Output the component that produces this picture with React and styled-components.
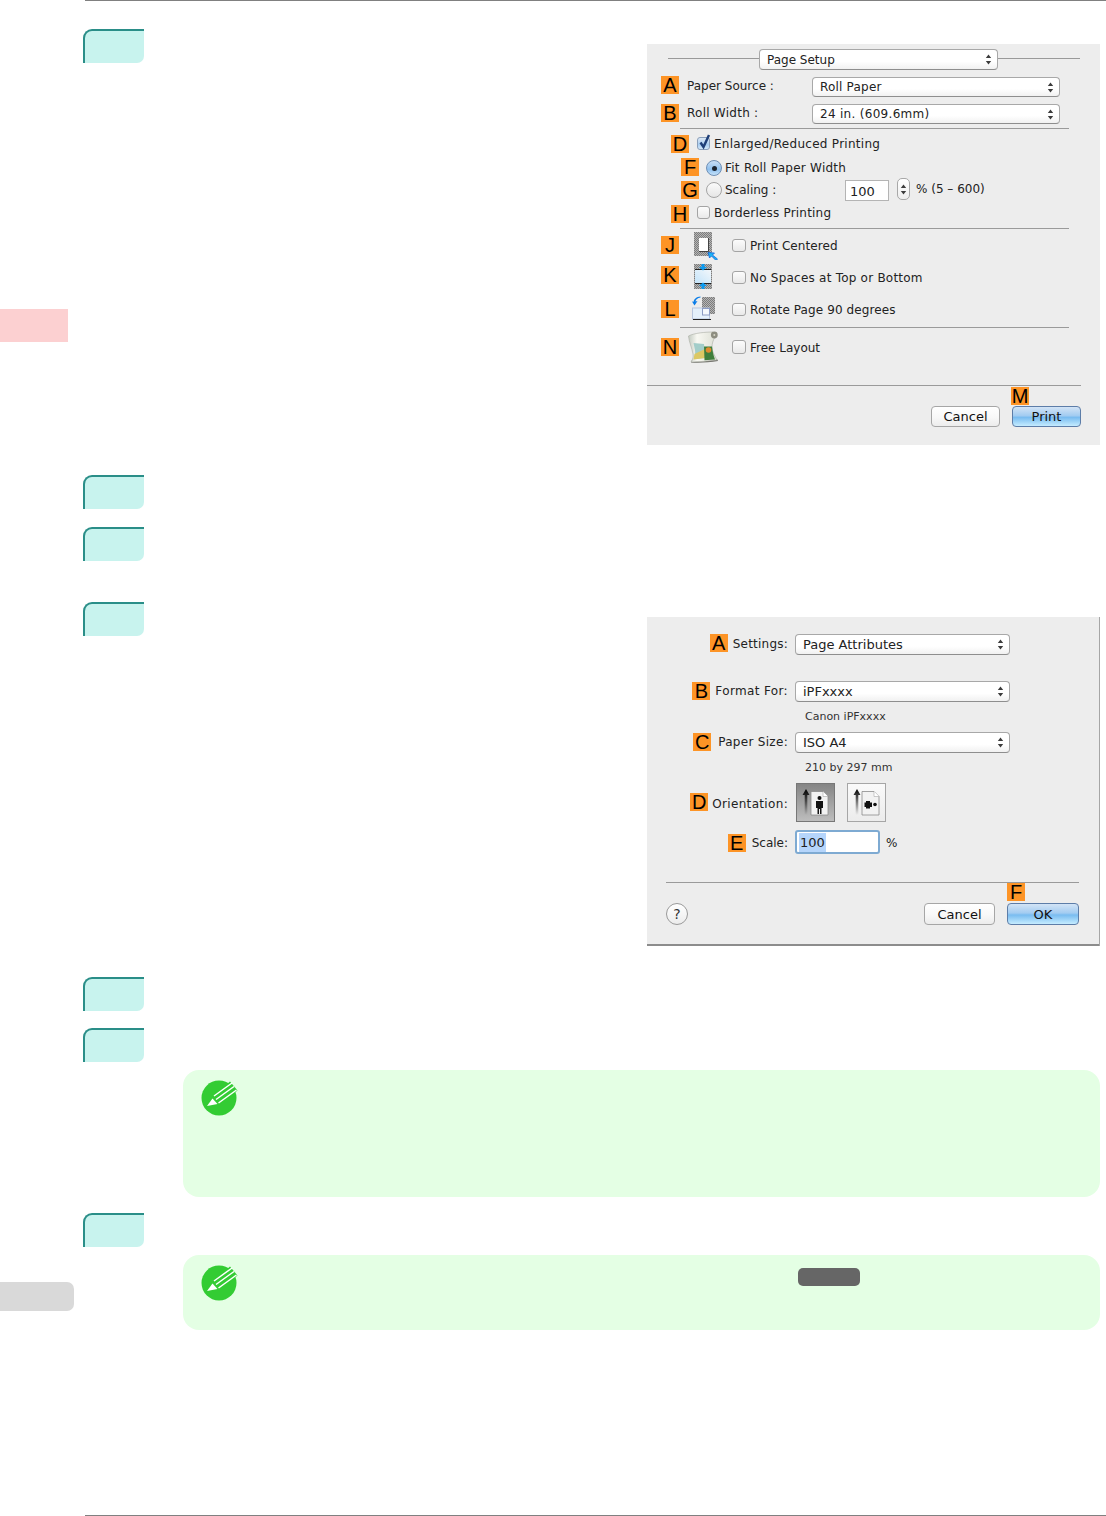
import styled, { createGlobalStyle } from "styled-components";

const GlobalStyle = createGlobalStyle`
  html, body {
    margin: 0;
    padding: 0;
    background: #fff;
    font-family: "DejaVu Sans", "Liberation Sans", sans-serif;
  }
`;

const Page = styled.div`
  width: 1106px;
  height: 1516px;
  display: flex;
  overflow: hidden;
  background: #fff;
`;

const Sidebar = styled.div`
  width: 83px;
  flex: none;
  display: flex;
  flex-direction: column;
`;

const ChapterTab = styled.div`
  width: 68px;
  height: 33px;
  margin-top: 309px;
  background: #fcd0d1;
`;

const SectionTab = styled.div`
  width: 74px;
  height: 29px;
  margin-top: 940px;
  background: #d9d9d9;
  border-radius: 0 7px 7px 0;
`;

const Main = styled.div`
  flex: 1;
  display: flex;
  flex-direction: column;
`;

const Rule = styled.div`
  height: 1px;
  flex: none;
  margin-left: 2px;
  background: #808080;
`;

const Content = styled.div`
  flex: 1;
  display: flex;
  flex-direction: column;
  padding: 28px 6px 0 0;
`;

const StepRow = styled.div`
  display: flex;
  justify-content: space-between;
  align-items: flex-start;
  margin-top: ${(p) => p.$top || 0}px;
`;

const StepBadge = styled.div`
  width: 61px;
  height: 34px;
  box-sizing: border-box;
  background: #c8f3ee;
  border-top: 2px solid #2a8e88;
  border-left: 2px solid #2a8e88;
  border-radius: 9px 0 7px 0;
`;

const Note = styled.div`
  display: flex;
  align-items: flex-start;
  margin: ${(p) => p.$top}px 0 0 100px;
  height: ${(p) => p.$h}px;
  padding: 10px 0 0 18px;
  box-sizing: border-box;
  background: #e4ffe4;
  border-radius: 16px;
`;

const KeyCap = styled.div`
  width: 62px;
  height: 18px;
  margin: 3px 0 0 560px;
  background: #666;
  border-radius: 5px;
`;

const Dialog = styled.div`
  width: 453px;
  margin-top: ${(p) => p.$top}px;
  padding: ${(p) => p.$pt}px 0 ${(p) => p.$pb}px;
  box-sizing: border-box;
  background: #ededed;
  color: #222;
  font-size: 12px;
  ${(p) => p.$framed && "box-shadow: inset -1px 0 #a6a6a6, inset 0 -2px #8c8c8c;"}
`;

const Row = styled.div`
  display: flex;
  align-items: flex-start;
  margin-top: ${(p) => p.$top || 0}px;
  padding-left: ${(p) => p.$left || 0}px;
`;

const Divider = styled.div`
  height: 1px;
  margin: ${(p) => p.$top}px 0 0 ${(p) => p.$left}px;
  width: ${(p) => p.$w}px;
  background: #9a9a9a;
`;

const HeaderLine = styled.div`
  width: ${(p) => p.$w}px;
  height: 1px;
  margin-top: 9px;
  background: #999;
`;

const Badge = styled.div`
  width: 18px;
  height: 18px;
  flex: none;
  display: flex;
  align-items: center;
  justify-content: center;
  margin: ${(p) => p.$mt || 0}px 0 0 ${(p) => p.$ml || 0}px;
  background: #fd9426;
  color: #000;
  font-family: "Liberation Sans", Arial, sans-serif;
  font-size: 20px;
  line-height: 18px;
`;

const Label = styled.div`
  flex: none;
  height: 18px;
  line-height: 18px;
  white-space: nowrap;
  margin: ${(p) => p.$mt || 0}px 0 0 ${(p) => p.$ml || 0}px;
  width: ${(p) => (p.$w ? `${p.$w}px` : "auto")};
  letter-spacing: ${(p) => p.$ls || 0}px;
`;

const SelectBox = styled.div`
  flex: none;
  display: flex;
  align-items: center;
  justify-content: space-between;
  width: ${(p) => p.$w}px;
  height: ${(p) => p.$h}px;
  margin: ${(p) => p.$mt || 0}px 0 0 ${(p) => p.$ml || 0}px;
  padding: 0 5px 0 7px;
  box-sizing: border-box;
  font-size: ${(p) => p.$fs || 12}px;
  letter-spacing: ${(p) => p.$ls || 0}px;
  background: linear-gradient(#fff, #fff 60%, #f1f1f1);
  border: 1px solid #a8a8a8;
  border-bottom-color: #8e8e8e;
  border-radius: 4px;
  white-space: nowrap;
`;

const Check = styled.div`
  flex: none;
  position: relative;
  width: ${(p) => p.$w || 14}px;
  height: ${(p) => p.$h || 13}px;
  margin: ${(p) => p.$mt || 0}px 0 0 ${(p) => p.$ml || 0}px;
  box-sizing: border-box;
  background: ${(p) =>
    p.$on ? "linear-gradient(#dbe8f6, #a9cdf0 60%, #d3e9fb)" : "linear-gradient(#fcfcfc, #e9e9e9)"};
  border: 1px solid ${(p) => (p.$on ? "#8a9fba" : "#a4a4a4")};
  border-radius: 3px;
`;

const CheckMark = styled.svg`
  position: absolute;
  left: -1px;
  top: -5px;
`;

const Radio = styled.div`
  flex: none;
  width: 16px;
  height: 16px;
  display: flex;
  align-items: center;
  justify-content: center;
  margin: ${(p) => p.$mt || 0}px 0 0 ${(p) => p.$ml || 0}px;
  box-sizing: border-box;
  border-radius: 50%;
  border: 1px solid ${(p) => (p.$on ? "#6f8fb5" : "#a4a4a4")};
  background: ${(p) =>
    p.$on ? "linear-gradient(#c9def5, #8fc0ee 60%, #c7e4fb)" : "linear-gradient(#fbfbfb, #e6e6e6)"};
`;

const RadioDot = styled.div`
  width: 5px;
  height: 5px;
  border-radius: 50%;
  background: #1c2430;
`;

const NumberField = styled.div`
  flex: none;
  width: 44px;
  height: 21px;
  margin: 2px 0 0 0;
  padding-left: 4px;
  box-sizing: border-box;
  line-height: 21px;
  font-size: 13px;
  background: #fff;
  border: 1px solid #b4b4b4;
`;

const Stepper = styled.div`
  flex: none;
  width: 13px;
  height: 22px;
  margin-left: 8px;
  display: flex;
  align-items: center;
  justify-content: center;
  box-sizing: border-box;
  background: linear-gradient(#fff, #eee);
  border: 1px solid #a8a8a8;
  border-radius: 5px;
`;

const IconSlot = styled.div`
  flex: none;
  width: ${(p) => p.$w || 53}px;
  padding-left: ${(p) => p.$pl}px;
  box-sizing: border-box;
  line-height: 0;
`;

const Footer = styled.div`
  display: flex;
  align-items: flex-end;
  justify-content: ${(p) => (p.$spread ? "space-between" : "flex-end")};
  padding: 0 ${(p) => p.$pr}px 0 ${(p) => p.$pl || 0}px;
`;

const ButtonGroup = styled.div`
  display: flex;
  align-items: flex-end;
  gap: 12px;
`;

const ButtonStack = styled.div`
  display: flex;
  flex-direction: column;
  align-items: flex-start;
  gap: ${(p) => p.$gap}px;
`;

const DialogButton = styled.div`
  width: ${(p) => p.$w}px;
  height: ${(p) => p.$h}px;
  display: flex;
  align-items: center;
  justify-content: center;
  box-sizing: border-box;
  font-size: 13px;
  color: #111;
  border-radius: 4px;
  border: 1px solid ${(p) => (p.$primary ? "#5d7da8" : "#a6a6a6")};
  background: ${(p) =>
    p.$primary
      ? "linear-gradient(#d3e4f6, #a3ccf1 45%, #79bcf0 55%, #c5ecff)"
      : "linear-gradient(#fff, #f8f8f8 55%, #ececec)"};
`;

const HelpButton = styled.div`
  width: 22px;
  height: 22px;
  display: flex;
  align-items: center;
  justify-content: center;
  box-sizing: border-box;
  border-radius: 50%;
  border: 1px solid #9a9a9a;
  background: linear-gradient(#fff, #ececec);
  font-size: 14px;
  color: #333;
`;

const FormLabel = styled.div`
  width: 141px;
  flex: none;
  display: flex;
  justify-content: flex-end;
  align-items: flex-start;
`;

const FormControl = styled.div`
  margin-left: ${(p) => p.$ml || 7}px;
  display: flex;
  align-items: flex-start;
  gap: ${(p) => p.$gap || 0}px;
`;

const Caption = styled.div`
  height: 14px;
  line-height: 14px;
  margin-top: ${(p) => p.$top}px;
  padding-left: 158px;
  font-size: 11px;
  color: #333;
`;

const OrientButton = styled.div`
  width: 39px;
  height: 39px;
  box-sizing: border-box;
  line-height: 0;
  border: 1px solid ${(p) => (p.$on ? "#777" : "#a6a6a6")};
  background: ${(p) => (p.$on ? "linear-gradient(#858585, #bdbdbd)" : "linear-gradient(#fafafa, #ececec)")};
`;

const ScaleField = styled.div`
  width: 85px;
  height: 24px;
  box-sizing: border-box;
  padding: 1px 0 0 2px;
  background: #fff;
  border: 2px solid #7eaad2;
  border-radius: 3px;
  font-size: 13px;
  line-height: 19px;
`;

const Selected = styled.span`
  display: inline-block;
  background: #b5d5fb;
  padding: 0 1px;
`;

const Arrows = () => (
  <svg width="7" height="11" viewBox="0 0 7 11">
    <path d="M3.5 0.5 L6.2 4 H0.8 Z M3.5 10.5 L0.8 7 H6.2 Z" fill="#3c3c3c" />
  </svg>
);

const CheckerDefs = ({ id }) => (
  <defs>
    <pattern id={id} width="2" height="2" patternUnits="userSpaceOnUse">
      <rect width="2" height="2" fill="#b4b4b4" />
      <rect width="1" height="1" fill="#7c7c7c" />
      <rect x="1" y="1" width="1" height="1" fill="#7c7c7c" />
    </pattern>
  </defs>
);

const CenteredIcon = () => (
  <svg width="24" height="28" viewBox="0 0 24 28">
    <CheckerDefs id="chkJ" />
    <rect width="18" height="24" fill="url(#chkJ)" />
    <rect x="5" y="6" width="9" height="13" fill="#fff" />
    <path d="M14.500 6v13.500H5" fill="none" stroke="#444" />
    <path d="M14 20.500l6.500.5-2 2 5 4-1.500 1.500-4.500-4.500-2 2z" fill="#18b4f4" stroke="#0b56d8" strokeWidth=".7" />
  </svg>
);

const NoSpaceIcon = () => (
  <svg width="18" height="25" viewBox="0 0 18 25">
    <defs>
      <linearGradient id="pageK" x1="0" y1="1" x2="1" y2="0">
        <stop offset="0" stopColor="#c4e4fa" />
        <stop offset="1" stopColor="#f2f7fb" />
      </linearGradient>
    </defs>
    <CheckerDefs id="chkK" />
    <rect width="18" height="25" fill="url(#chkK)" />
    <rect x="1" y="6" width="16" height="13" fill="url(#pageK)" />
    <path d="M1 5.500h16M1 19.500h16" stroke="#222" fill="none" />
    <path d="M7.500 0h3v3H13L9 6.500 5 3h2.500z" fill="#0a9af0" />
    <path d="M9 18.500l4 3.500h-2.500v3h-3v-3H5z" fill="#0a9af0" />
  </svg>
);

const RotateIcon = () => (
  <svg width="24" height="24" viewBox="0 0 24 24">
    <CheckerDefs id="chkL" />
    <rect x="10" y="1" width="13" height="17" fill="url(#chkL)" />
    <rect x=".5" y="12" width="17" height="11" fill="#e4f0fb" stroke="#b8c6de" />
    <rect x="10.500" y="12.500" width="7" height="6.500" fill="#f4f8fc" stroke="#8c9cc4" />
    <path d="M1 23.500h18" stroke="#222" />
    <path d="M8.500 1.500C5.500 2 3.800 3.500 3.500 5.500L5.500 5 2.500 9.500 0 5.500l1.600.3C2 3 4.500.8 8.500.5z" fill="#0a7de8" />
  </svg>
);

const FreeLayoutIcon = () => (
  <svg width="32" height="33" viewBox="0 0 32 33">
    <defs>
      <linearGradient id="paperN" x1="0" y1="0" x2="1" y2="0">
        <stop offset="0" stopColor="#c4cbc2" />
        <stop offset="0.3" stopColor="#f8f8f2" />
        <stop offset="1" stopColor="#dcded4" />
      </linearGradient>
    </defs>
    <path d="M3 32.500c8 .5 18 0 27-1.500l-1-2-25 1z" fill="#6e6e68" />
    <path d="M.5 6C6 3 18 2 25 2l2 5c-2 3-3 7-3 10 0 5 3 9 5 13-9 1-19 2-26 2 2-3 2.500-5 2-8C4 18 1 12 .5 6z" fill="url(#paperN)" stroke="#a9ada2" strokeWidth=".6" />
    <circle cx="26.300" cy="5" r="3.400" fill="#8d8d80" />
    <circle cx="26.300" cy="5" r="1" fill="#d4d4c4" />
    <path d="M5.500 13l10.500 1 1 14-11 1c1-3 1.500-6 1-9z" fill="#a2cdc9" />
    <path d="M6.500 24l10.500-5 .5 9-12 1.500z" fill="#dcc864" />
    <path d="M16 16.500l8 0c.5 5 1.500 9 3 13l-10.500.800z" fill="#3f7f3c" />
    <circle cx="20.500" cy="20" r="2.800" fill="#e08b2e" />
  </svg>
);

const OrientGlyph = ({ on }) => (
  <svg width="37" height="37" viewBox="0 0 37 37">
    <defs>
      <linearGradient id={on ? "shaftA" : "shaftB"} x1="0" y1="0" x2="0" y2="1">
        <stop offset="0" stopColor="#000" />
        <stop offset="1" stopColor="#000" stopOpacity="0" />
      </linearGradient>
    </defs>
    <path d="M9 5l3.500 6H10.300v20H7.700V11H5.500z" fill={`url(#${on ? "shaftA" : "shaftB"})`} />
    <path d="M14 7.500h12l5 5V31H14z" fill="#f2f2f2" stroke="#8a8a8a" strokeWidth=".8" />
    <path d="M26 7.500v5h5" fill="#fff" stroke="#a8a8a8" strokeWidth=".6" />
    {on ? (
      <g fill="#111">
        <circle cx="22.500" cy="14" r="2" />
        <path d="M19 17h7v7h-1.500v6h-1.500v-5h-1v5h-1.500v-6H19z" />
      </g>
    ) : (
      <g fill="#111">
        <circle cx="27" cy="20.500" r="1.800" />
        <path d="M18 17h4v1.500h2v4.500h-2v1.500h-4V23h-1.500v-4.500H18z" />
      </g>
    )}
  </svg>
);

const NoteIcon = () => (
  <svg width="37" height="36" viewBox="0 0 37 36">
    <circle cx="18" cy="18" r="17.500" fill="#33cc33" />
    <path d="M29 1.500l7.500 9-10 8-7-9z" fill="#33cc33" />
    <path d="M13 16L31 3M15 19.500L33 6.500M17.500 23L35.500 10" stroke="#fff" strokeWidth="1.500" fill="none" />
    <path d="M6 26l5.500-7.500 5 5.500z" fill="#fff" />
  </svg>
);

const PageSetupDialog = () => (
  <Dialog $top={15} $pt={5} $pb={18}>
    <Row $left={21}>
      <HeaderLine $w={91} />
      <SelectBox $w={239} $h={21}>
        Page Setup
        <Arrows />
      </SelectBox>
      <HeaderLine $w={82} />
    </Row>
    <Row $top={6} $left={14}>
      <Badge>A</Badge>
      <Label $ml={8} $mt={1} $w={125}>Paper Source :</Label>
      <SelectBox $w={248} $h={20} $mt={1} $ls={0.2}>
        Roll Paper
        <Arrows />
      </SelectBox>
    </Row>
    <Row $top={7} $left={14}>
      <Badge>B</Badge>
      <Label $ml={8} $w={125} $ls={0.25}>Roll Width :</Label>
      <SelectBox $w={248} $h={20} $ls={0.3}>
        24 in. (609.6mm)
        <Arrows />
      </SelectBox>
    </Row>
    <Divider $top={4} $left={33} $w={389} />
    <Row $top={6} $left={24}>
      <Badge>D</Badge>
      <Check $on $ml={8} $mt={2} $w={13}>
        <CheckMark width="15" height="17" viewBox="0 0 15 17">
          <path d="M3.500 9.500l3 4.500 5.500-12" fill="none" stroke="#1f3f78" strokeWidth="2.400" />
        </CheckMark>
      </Check>
      <Label $ml={4} $ls={0.28}>Enlarged/Reduced Printing</Label>
    </Row>
    <Row $top={5} $left={34}>
      <Badge>F</Badge>
      <Radio $on $ml={7} $mt={2}>
        <RadioDot />
      </Radio>
      <Label $ml={3} $mt={1} $ls={0.25}>Fit Roll Paper Width</Label>
    </Row>
    <Row $top={1} $left={34}>
      <Badge $mt={3}>G</Badge>
      <Radio $ml={7} $mt={4} />
      <Label $ml={3} $mt={3} $w={120}>Scaling :</Label>
      <NumberField>100</NumberField>
      <Stepper>
        <Arrows />
      </Stepper>
      <Label $ml={6} $mt={2}>% (5 – 600)</Label>
    </Row>
    <Row $top={3} $left={24}>
      <Badge $mt={1}>H</Badge>
      <Check $ml={8} $mt={2} $w={13} />
      <Label $ml={4} $ls={0.2}>Borderless Printing</Label>
    </Row>
    <Divider $top={5} $left={33} $w={389} />
    <Row $top={3} $left={14}>
      <Badge $mt={4}>J</Badge>
      <IconSlot $pl={15}>
        <CenteredIcon />
      </IconSlot>
      <Check $mt={7} />
      <Label $ml={4} $mt={5} $ls={0.08}>Print Centered</Label>
    </Row>
    <Row $top={4} $left={14}>
      <Badge $mt={2}>K</Badge>
      <IconSlot $pl={15}>
        <NoSpaceIcon />
      </IconSlot>
      <Check $mt={7} />
      <Label $ml={4} $mt={5} $ls={0.23}>No Spaces at Top or Bottom</Label>
    </Row>
    <Row $top={7} $left={14}>
      <Badge $mt={4}>L</Badge>
      <IconSlot $pl={13}>
        <RotateIcon />
      </IconSlot>
      <Check $mt={7} />
      <Label $ml={4} $mt={5} $ls={0.1}>Rotate Page 90 degrees</Label>
    </Row>
    <Divider $top={7} $left={33} $w={389} />
    <Row $top={2} $left={14}>
      <Badge $mt={8}>N</Badge>
      <IconSlot $pl={9}>
        <FreeLayoutIcon />
      </IconSlot>
      <Check $mt={10} $h={14} />
      <Label $ml={4} $mt={9}>Free Layout</Label>
    </Row>
    <Divider $top={22} $left={0} $w={434} />
    <Footer $pr={19}>
      <ButtonGroup>
        <DialogButton $w={69} $h={21}>Cancel</DialogButton>
        <ButtonStack $gap={1}>
          <Badge $ml={-1} $mt={1}>M</Badge>
          <DialogButton $primary $w={69} $h={21}>Print</DialogButton>
        </ButtonStack>
      </ButtonGroup>
    </Footer>
  </Dialog>
);

const PageAttributesDialog = () => (
  <Dialog $top={15} $pt={17} $pb={21} $framed>
    <Row>
      <FormLabel>
        <Badge>A</Badge>
        <Label $ml={5} $mt={1} $ls={0.22}>Settings:</Label>
      </FormLabel>
      <FormControl>
        <SelectBox $w={215} $h={21} $fs={13}>
          Page Attributes
          <Arrows />
        </SelectBox>
      </FormControl>
    </Row>
    <Row $top={26}>
      <FormLabel>
        <Badge $mt={1}>B</Badge>
        <Label $ml={5} $mt={1} $ls={0.36}>Format For:</Label>
      </FormLabel>
      <FormControl>
        <SelectBox $w={215} $h={21} $fs={13}>
          iPFxxxx
          <Arrows />
        </SelectBox>
      </FormControl>
    </Row>
    <Caption $top={8}>Canon iPFxxxx</Caption>
    <Row $top={8}>
      <FormLabel>
        <Badge $mt={1}>C</Badge>
        <Label $ml={7} $mt={1} $ls={0.3}>Paper Size:</Label>
      </FormLabel>
      <FormControl>
        <SelectBox $w={215} $h={21} $fs={13}>
          ISO A4
          <Arrows />
        </SelectBox>
      </FormControl>
    </Row>
    <Caption $top={8}>210 by 297 mm</Caption>
    <Row $top={8}>
      <FormLabel>
        <Badge $mt={10}>D</Badge>
        <Label $ml={4} $mt={12} $ls={0.33}>Orientation:</Label>
      </FormLabel>
      <FormControl $ml={8} $gap={12}>
        <OrientButton $on>
          <OrientGlyph on />
        </OrientButton>
        <OrientButton>
          <OrientGlyph />
        </OrientButton>
      </FormControl>
    </Row>
    <Row $top={8}>
      <FormLabel>
        <Badge $mt={4}>E</Badge>
        <Label $ml={6} $mt={4}>Scale:</Label>
      </FormLabel>
      <FormControl>
        <ScaleField>
          <Selected>100</Selected>
        </ScaleField>
        <Label $ml={6} $mt={4}>%</Label>
      </FormControl>
    </Row>
    <Divider $top={28} $left={19} $w={413} />
    <Footer $spread $pl={19} $pr={21}>
      <HelpButton>?</HelpButton>
      <ButtonGroup>
        <DialogButton $w={71} $h={22}>Cancel</DialogButton>
        <ButtonStack $gap={2}>
          <Badge>F</Badge>
          <DialogButton $primary $w={72} $h={22}>OK</DialogButton>
        </ButtonStack>
      </ButtonGroup>
    </Footer>
  </Dialog>
);

export default function App() {
  return (
    <Page>
      <GlobalStyle />
      <Sidebar>
        <ChapterTab />
        <SectionTab />
      </Sidebar>
      <Main>
        <Rule />
        <Content>
          <StepRow>
            <StepBadge />
            <PageSetupDialog />
          </StepRow>
          <StepRow $top={30}>
            <StepBadge />
          </StepRow>
          <StepRow $top={18}>
            <StepBadge />
          </StepRow>
          <StepRow $top={41}>
            <StepBadge />
            <PageAttributesDialog />
          </StepRow>
          <StepRow $top={31}>
            <StepBadge />
          </StepRow>
          <StepRow $top={17}>
            <StepBadge />
          </StepRow>
          <Note $top={8} $h={127}>
            <NoteIcon />
          </Note>
          <StepRow $top={16}>
            <StepBadge />
          </StepRow>
          <Note $top={8} $h={75}>
            <NoteIcon />
            <KeyCap />
          </Note>
        </Content>
        <Rule />
      </Main>
    </Page>
  );
}
